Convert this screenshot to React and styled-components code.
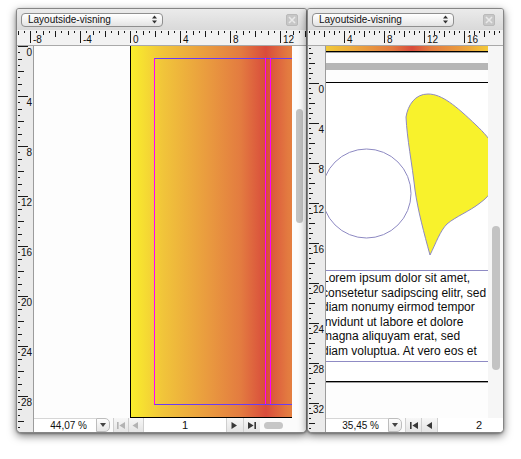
import React from "react";
import styled, { createGlobalStyle } from "styled-components";

const GlobalStyle = createGlobalStyle`
  html, body {
    margin: 0;
    padding: 0;
    background: #ffffff;
  }
  body {
    font-family: "Liberation Sans", Arial, sans-serif;
  }
`;

const PAGE_FILL =
  "linear-gradient(to right, #f9ee2c 0%, #f1c53a 12%, #e9993f 30%, #e37b40 42%, #d94c3c 51.5%, #e37b40 60%, #eb9d3e 75%, #f3ca38 88%, #f8e532 100%)";

const Desktop = styled.div`
  width: 521px;
  height: 459px;
  box-sizing: border-box;
  padding: 8px 0 0 16px;
  display: flex;
  align-items: flex-start;
  background: #fff;
  overflow: hidden;
`;

const Window = styled.div`
  width: ${(p) => p.$width}px;
  height: 425px;
  flex: none;
  box-sizing: border-box;
  border: 1px solid #858585;
  border-radius: 3px 3px 5px 5px;
  background: #ececec;
  display: flex;
  flex-direction: column;
  overflow: hidden;
  box-shadow: 0 3px 9px rgba(0, 0, 0, 0.5), 0 1px 2px rgba(0, 0, 0, 0.3);
  position: relative;
  z-index: ${(p) => p.$z || 1};
`;

const TitleBar = styled.div`
  height: 21px;
  flex: none;
  display: flex;
  align-items: center;
  justify-content: space-between;
  padding: 0 8px 0 4px;
  background: linear-gradient(#ebebeb, #d9d9d9);
`;

const Popup = styled.div`
  width: 142px;
  height: 14px;
  box-sizing: border-box;
  border: 1px solid #8f8f8f;
  border-radius: 4px;
  background: linear-gradient(#ffffff, #f1f1f1 55%, #e3e3e3);
  display: flex;
  align-items: center;
  justify-content: space-between;
  padding: 0 5px 0 6px;
  font-size: 10px;
  color: #111;
  white-space: nowrap;
`;

const CloseBox = styled.div`
  width: 12px;
  height: 12px;
  box-sizing: border-box;
  border-radius: 2px;
  background: #c7c7c7;
  border: 1px solid #bababa;
  display: flex;
  align-items: center;
  justify-content: center;
`;

const RulerStrip = styled.div`
  height: 16px;
  flex: none;
  box-sizing: border-box;
  background: #f2f2f2;
  border-bottom: 1px solid #a9a9a9;
  overflow: hidden;
`;

const VRulerStrip = styled.div`
  width: ${(p) => p.$width}px;
  flex: none;
  box-sizing: border-box;
  background: #ebebeb;
  border-right: 1px solid #9c9c9c;
  overflow: hidden;
`;

const TickSvg = styled.svg`
  display: block;
  line {
    stroke: #1a1a1a;
    stroke-width: 1;
    shape-rendering: crispEdges;
  }
  text {
    font-family: "Liberation Sans", Arial, sans-serif;
    font-size: 10px;
    fill: #111;
  }
`;

const Body = styled.div`
  flex: 1;
  min-height: 0;
  display: flex;
`;

const Main = styled.div`
  flex: 1;
  min-width: 0;
  display: flex;
  flex-direction: column;
`;

const ViewRow = styled.div`
  flex: 1;
  min-height: 0;
  display: flex;
`;

const Canvas = styled.div`
  flex: 1;
  position: relative;
  overflow: hidden;
  background: #fdfdfd;
`;

const ScrollTrack = styled.div`
  width: ${(p) => p.$width}px;
  flex: none;
  box-sizing: border-box;
  padding-left: 4px;
  background: ${(p) => p.$bg || "#fcfcfc"};
`;

const Thumb = styled.div`
  width: ${(p) => p.$width}px;
  height: ${(p) => p.$height}px;
  margin-top: ${(p) => p.$offset}px;
  border-radius: 4px;
  background: #c3c3c3;
`;

const BottomBar = styled.div`
  height: 14px;
  flex: none;
  display: flex;
  align-items: stretch;
  background: #fbfbfb;
  overflow: hidden;
`;

const ZoomField = styled.div`
  width: 62px;
  flex: none;
  box-sizing: border-box;
  background: #fff;
  border-top: 1px solid #d6d6d6;
  display: flex;
  align-items: center;
  justify-content: flex-end;
  padding-right: 9px;
  font-size: 10px;
  color: #111;
`;

const DropButton = styled.div`
  width: 14px;
  flex: none;
  box-sizing: border-box;
  border: 1px solid #bdbdbd;
  border-radius: 0 5px 5px 0;
  background: linear-gradient(#fdfdfd, #e6e6e6);
  display: flex;
  align-items: center;
  justify-content: center;
  margin-right: 3px;
`;

const NavButton = styled.div`
  width: ${(p) => p.$width}px;
  flex: none;
  box-sizing: border-box;
  border-left: 1px solid #cfcfcf;
  background: linear-gradient(#f7f7f7, #e4e4e4);
  display: flex;
  align-items: center;
  justify-content: center;
  color: ${(p) => (p.$disabled ? "#b3b3b3" : "#383838")};
`;

const PageField = styled.div`
  width: 83px;
  flex: none;
  box-sizing: border-box;
  background: #fff;
  border-left: 1px solid #cfcfcf;
  display: flex;
  align-items: center;
  justify-content: center;
  font-size: 11px;
  color: #111;
`;

const ScrollPill = styled.div`
  width: 19px;
  height: 7px;
  flex: none;
  align-self: center;
  margin-left: 4px;
  border-radius: 4px;
  background: #c6c6c6;
`;

const Sheet = styled.div`
  position: absolute;
  left: ${(p) => p.$x}px;
  top: ${(p) => p.$y}px;
  width: ${(p) => p.$w}px;
  height: ${(p) => p.$h}px;
  box-sizing: border-box;
  border: 1px solid #000;
  background: ${(p) => p.$fill || "#fff"};
  box-shadow: 0 1px 0 #a0a0a0;
`;

const MarginGuide = styled.div`
  position: absolute;
  left: ${(p) => p.$x}px;
  top: ${(p) => p.$y}px;
  width: ${(p) => p.$w}px;
  height: ${(p) => p.$h}px;
  box-sizing: border-box;
  border-top: 1px solid #6a3cf4;
  border-bottom: 1px solid #6a3cf4;
  border-left: 1px solid #ff00ff;
  border-right: 1px solid #ff00ff;
`;

const ColumnGuide = styled.div`
  position: absolute;
  left: ${(p) => p.$x}px;
  top: ${(p) => p.$y}px;
  width: 1px;
  height: ${(p) => p.$h}px;
  background: #ff00ff;
`;

const Band = styled.div`
  position: absolute;
  left: 0;
  right: 0;
  top: ${(p) => p.$y}px;
  height: ${(p) => p.$h}px;
  background: #b6b6b6;
`;

const Drawing = styled.svg`
  position: absolute;
  left: 0;
  top: 0;
  overflow: visible;
`;

const TextFrame = styled.div`
  position: absolute;
  left: ${(p) => p.$x}px;
  top: ${(p) => p.$y}px;
  width: ${(p) => p.$w}px;
  height: ${(p) => p.$h}px;
  box-sizing: border-box;
  border: 1px solid #8f8bc4;
  overflow: hidden;
  font-family: "Liberation Sans", Arial, sans-serif;
  font-size: 12px;
  line-height: 14.6px;
  color: #0c0c0c;
  white-space: nowrap;
`;

// tick marks every half unit, a label every 4 units (labels only where the
// tick itself lies inside the strip)
const HRuler = ({ origin, scale, length }) => {
  const step = scale / 2;
  const items = [];
  for (let h = Math.floor(-origin / step); origin + h * step <= length; h++) {
    const x = Math.round(origin + h * step) + 0.5;
    const m = ((h % 8) + 8) % 8;
    const len = m === 0 ? 12 : m === 4 ? 6 : m % 2 === 0 ? 4 : 2;
    items.push(<line key={h} x1={x} x2={x} y1={1} y2={1 + len} />);
    if (m === 0 && x > 0) {
      items.push(
        <text key={`l${h}`} x={x + 2.5} y={13}>
          {h / 2}
        </text>
      );
    }
  }
  return (
    <TickSvg width={length} height={15}>
      {items}
    </TickSvg>
  );
};

const VRuler = ({ origin, scale, length, width }) => {
  const step = scale / 2;
  const items = [];
  for (let h = Math.floor(-origin / step); origin + h * step <= length; h++) {
    const y = Math.round(origin + h * step) + 0.5;
    const m = ((h % 8) + 8) % 8;
    const len = m === 0 ? 10 : m === 4 ? 6 : m % 2 === 0 ? 4 : 2;
    items.push(<line key={h} x1={1} x2={1 + len} y1={y} y2={y} />);
    if (m === 0 && y > 0) {
      items.push(
        <text key={`l${h}`} x={width - 1} y={y + 9.5} textAnchor="end">
          {h / 2}
        </text>
      );
    }
  }
  return (
    <TickSvg width={width} height={length}>
      {items}
    </TickSvg>
  );
};

const PopupArrows = () => (
  <svg width="5" height="9" viewBox="0 0 5 9">
    <path d="M0 3.5 L2.5 0.5 L5 3.5 Z M0 5.5 L2.5 8.5 L5 5.5 Z" fill="#333" />
  </svg>
);

const CloseMark = () => (
  <svg width="8" height="8" viewBox="0 0 8 8">
    <path d="M1 1 L7 7 M7 1 L1 7" stroke="#e9e9e9" strokeWidth="1.6" />
  </svg>
);

const DownArrow = () => (
  <svg width="6" height="4" viewBox="0 0 6 4">
    <path d="M0 0 L6 0 L3 4 Z" fill="#444" />
  </svg>
);

const NavIcon = ({ kind }) => {
  const shapes = {
    first: "M0 0 H1.6 V7 H0 Z M8 0 V7 L2.4 3.5 Z",
    prev: "M6 0 V7 L0.5 3.5 Z",
    next: "M0.5 0 V7 L6 3.5 Z",
    last: "M0 0 V7 L5.6 3.5 Z M6.4 0 H8 V7 H6.4 Z",
  };
  return (
    <svg width="8" height="7" viewBox="0 0 8 7">
      <path d={shapes[kind]} fill="currentColor" />
    </svg>
  );
};

const WindowHead = () => (
  <TitleBar>
    <Popup>
      <span>Layoutside-visning</span>
      <PopupArrows />
    </Popup>
    <CloseBox>
      <CloseMark />
    </CloseBox>
  </TitleBar>
);

const BLOB =
  "M102 34 C104 22 111 11 124 11 C138 11 152 23 172 42 C188 57 198 72 195 90 C193 102 187 112 176 120 C166 128 151 134 143 141 C136 148 132 160 126 172 C120 150 114 128 111 107 C108 80 103 56 102 34 Z";

const LOREM = [
  "Lorem ipsum dolor sit amet,",
  "consetetur sadipscing elitr, sed",
  "diam nonumy eirmod tempor",
  "invidunt ut labore et dolore",
  "magna aliquyam erat, sed",
  "diam voluptua. At vero eos et",
];

const App = () => (
  <>
    <GlobalStyle />
    <Desktop>
      <Window $width={291}>
        <WindowHead />
        <RulerStrip>
          <HRuler origin={113} scale={12.5} length={289} />
        </RulerStrip>
        <Body>
          <VRulerStrip $width={17}>
            <VRuler origin={0} scale={12.5} length={386} width={16} />
          </VRulerStrip>
          <Main>
            <ViewRow>
              <Canvas>
                <Sheet $x={96} $y={-1} $w={264} $h={373} $fill={PAGE_FILL}>
                  <MarginGuide $x={23} $y={12} $w={214} $h={347} />
                  <ColumnGuide $x={134} $y={12} $h={346} />
                  <ColumnGuide $x={139} $y={12} $h={346} />
                </Sheet>
              </Canvas>
              <ScrollTrack $width={14}>
                <Thumb $width={7} $height={114} $offset={63} />
              </ScrollTrack>
            </ViewRow>
            <BottomBar>
              <ZoomField>44,07 %</ZoomField>
              <DropButton>
                <DownArrow />
              </DropButton>
              <NavButton $width={15} $disabled>
                <NavIcon kind="first" />
              </NavButton>
              <NavButton $width={15} $disabled>
                <NavIcon kind="prev" />
              </NavButton>
              <PageField>1</PageField>
              <NavButton $width={17}>
                <NavIcon kind="next" />
              </NavButton>
              <NavButton $width={17}>
                <NavIcon kind="last" />
              </NavButton>
              <ScrollPill />
            </BottomBar>
          </Main>
        </Body>
      </Window>

      <Window $width={197} $z={2}>
        <WindowHead />
        <RulerStrip>
          <HRuler origin={-4} scale={10} length={195} />
        </RulerStrip>
        <Body>
          <VRulerStrip $width={18}>
            <VRuler origin={37} scale={10} length={386} width={17} />
          </VRulerStrip>
          <Main>
            <ViewRow>
              <Canvas>
                <Sheet $x={-23} $y={-300} $w={212} $h={306} $fill={PAGE_FILL} />
                <Band $y={17} $h={7} />
                <Sheet $x={-23} $y={36} $w={212} $h={300}>
                  <Drawing width="210" height="200">
                    <circle cx="62.5" cy="110.5" r="44.5" fill="none" stroke="#8d89c2" strokeWidth="1" />
                    <path d={BLOB} fill="#f8f22c" stroke="#8d89c2" strokeWidth="1" />
                  </Drawing>
                  <TextFrame $x={17} $y={187} $w={190} $h={92}>
                    {LOREM.map((line) => (
                      <div key={line}>{line}</div>
                    ))}
                  </TextFrame>
                </Sheet>
              </Canvas>
              <ScrollTrack $width={15} $bg="#f6f6f6">
                <Thumb $width={8} $height={144} $offset={180} />
              </ScrollTrack>
            </ViewRow>
            <BottomBar>
              <ZoomField>35,45 %</ZoomField>
              <DropButton>
                <DownArrow />
              </DropButton>
              <NavButton $width={16}>
                <NavIcon kind="first" />
              </NavButton>
              <NavButton $width={16}>
                <NavIcon kind="prev" />
              </NavButton>
              <PageField>2</PageField>
              <NavButton $width={17}>
                <NavIcon kind="next" />
              </NavButton>
              <NavButton $width={17}>
                <NavIcon kind="last" />
              </NavButton>
            </BottomBar>
          </Main>
        </Body>
      </Window>
    </Desktop>
  </>
);

export default App;
